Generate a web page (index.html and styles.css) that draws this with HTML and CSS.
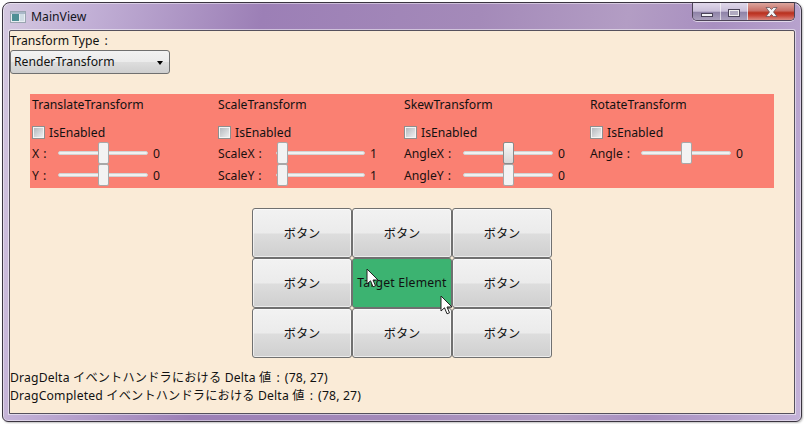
FILE: index.html
```html
<!DOCTYPE html>
<html lang="ja">
<head>
<meta charset="utf-8">
<title>MainView</title>
<link rel="stylesheet" href="styles.css">
</head>
<body>
<div class="window">
  <header class="titlebar">
    <svg class="app-icon" width="16" height="12" viewBox="0 0 16 12"><rect x="0.5" y="0.5" width="15" height="11" fill="#e8eef2" stroke="#9aa4b0"/><rect x="1" y="1" width="14" height="2" fill="#a9b8c8"/><rect x="2" y="3" width="7" height="7" fill="#4f8f94"/><rect x="10" y="3" width="4" height="7" fill="#d0dce4"/></svg>
    <span class="title">MainView</span>
    <div class="controls">
      <div class="ctl ctl-min"><span class="min-glyph"></span></div>
      <div class="ctl ctl-max"><span class="max-glyph"></span></div>
      <div class="ctl ctl-close"><svg width="13" height="10" viewBox="0 0 13 10"><path d="M1 .5h3.500L6.500 2.500 8.500 .5H12L8.500 5 12 9.500H8.500L6.500 7.500 4.500 9.500H1L4.500 5z" fill="#f4f4f6" stroke="#5a4a50" stroke-width="0.7"/></svg></div>
    </div>
  </header>
  <main class="content">
    <div class="type-label">Transform Type<span class="sep">:</span></div>
    <div class="combo"><span>RenderTransform</span><span class="combo-arrow"></span></div>
    <section class="panel">
      <div class="col">
        <div class="col-title">TranslateTransform</div>
        <label class="check"><span class="box"></span>IsEnabled</label>
        <div class="row"><span class="lab lab-s">X<span class="sep">:</span></span><span class="slider"><i class="thumb mid"></i></span><span class="val">0</span></div>
        <div class="row"><span class="lab lab-s">Y<span class="sep">:</span></span><span class="slider"><i class="thumb mid"></i></span><span class="val">0</span></div>
      </div>
      <div class="col">
        <div class="col-title">ScaleTransform</div>
        <label class="check"><span class="box"></span>IsEnabled</label>
        <div class="row"><span class="lab lab-m">ScaleX<span class="sep">:</span></span><span class="slider"><i class="thumb start"></i></span><span class="val">1</span></div>
        <div class="row"><span class="lab lab-m">ScaleY<span class="sep">:</span></span><span class="slider"><i class="thumb start"></i></span><span class="val">1</span></div>
      </div>
      <div class="col">
        <div class="col-title">SkewTransform</div>
        <label class="check"><span class="box"></span>IsEnabled</label>
        <div class="row"><span class="lab lab-l">AngleX<span class="sep">:</span></span><span class="slider"><i class="thumb mid active"></i></span><span class="val">0</span></div>
        <div class="row"><span class="lab lab-l">AngleY<span class="sep">:</span></span><span class="slider"><i class="thumb mid"></i></span><span class="val">0</span></div>
      </div>
      <div class="col">
        <div class="col-title">RotateTransform</div>
        <label class="check"><span class="box"></span>IsEnabled</label>
        <div class="row"><span class="lab lab-xl">Angle<span class="sep">:</span></span><span class="slider"><i class="thumb mid"></i></span><span class="val">0</span></div>
      </div>
    </section>
    <section class="grid">
      <button class="btn">ボタン</button>
      <button class="btn">ボタン</button>
      <button class="btn">ボタン</button>
      <button class="btn">ボタン</button>
      <div class="target">Target Element
        <svg class="cursor cursor-a" width="13" height="20" viewBox="0 0 13 20"><path d="M1 1v15l3.500-3.200 2.500 6 2.500-1-2.500-5.800H12z" fill="#fff" stroke="#222" stroke-width="1"/></svg>
        <svg class="cursor cursor-b" width="13" height="20" viewBox="0 0 13 20"><path d="M1 1v15l3.500-3.200 2.500 6 2.500-1-2.500-5.800H12z" fill="#fff" stroke="#222" stroke-width="1"/></svg>
      </div>
      <button class="btn">ボタン</button>
      <button class="btn">ボタン</button>
      <button class="btn">ボタン</button>
      <button class="btn">ボタン</button>
    </section>
    <p class="status">DragDelta イベントハンドラにおける Delta 値<span class="sep">:</span>(78, 27)</p>
    <p class="status">DragCompleted イベントハンドラにおける Delta 値<span class="sep">:</span>(78, 27)</p>
  </main>
</div>
</body>
</html>
```
FILE: styles.css
```css
* { box-sizing: border-box; }
html, body { margin: 0; padding: 0; width: 804px; height: 424px; overflow: hidden; background: #fff; }
body { padding: 2px 0 0 2px; font-family: "Noto Sans", "Noto Sans CJK JP", sans-serif; font-size: 12.2px; color: #111; }

.window {
  width: 800px; height: 420px;
  display: flex; flex-direction: column;
  border: 1px solid #3a3440; border-radius: 8px 8px 6px 6px;
  background: linear-gradient(100deg, #d4c8e0 0%, #c2b0d6 10%, #9c7fb6 30%, #a48ab9 55%, #b39dc4 72%, #a88fc0 82%, #c4b2d8 100%);
  box-shadow: inset 0 0 0 1px rgba(255,255,255,.45), 1px 1px 2px rgba(0,0,0,.25);
}
.titlebar { height: 27px; flex: none; display: flex; align-items: center; padding: 0 6px 0 7px; position: relative; }
.app-icon { flex: none; }
.title { margin-left: 5px; color: #14141c; }
.controls {
  margin-left: auto; align-self: flex-start;
  display: flex; height: 18px; width: 103px;
  border: 1px solid #4d4458; border-top: 0; border-radius: 0 0 5px 5px; overflow: hidden;
  box-shadow: 0 1px 0 rgba(255,255,255,.6);
}
.ctl { display: flex; align-items: center; justify-content: center; height: 100%; border-right: 1px solid rgba(255,255,255,.6); }
.ctl-min, .ctl-max { width: 28px; background: linear-gradient(#e0d8ea 0%, #c9bfd9 48%, #8f83a8 55%, #aaa0bd 100%); }
.ctl-max { width: 27px; }
.ctl-close { flex: 1; border-right: 0; background: linear-gradient(#dca69e 0%, #c96f66 45%, #b8301e 58%, #c8483a 75%, #d88a80 100%); }
.min-glyph { width: 12px; height: 4px; margin-top: 7px; background: #f2f2f6; border: 1px solid #4a4358; }
.max-glyph { width: 12px; height: 8px; margin-top: 2px; border: 1px solid #4a4358; background: #b0aac0; box-shadow: inset 0 0 0 1px #eee; }

.content {
  margin: 0 6px 0 6px; height: 384px; flex: none;
  background: #faebd7; border: 1px solid #55505c; border-radius: 2px 2px 0 0;
  display: flex; flex-direction: column;
  box-shadow: 0 0 0 1px rgba(255,255,255,.5);
}
.sep { margin: 0 5px 0 5px; }
.type-label { height: 18px; line-height: 20px; }
.combo {
  width: 160px; height: 24px; margin-top: 1px; flex: none;
  display: flex; align-items: center; justify-content: space-between; padding: 0 6px 2px 3px;
  border: 1px solid #707070; border-radius: 3px;
  background: linear-gradient(#f2f2f2 0%, #ebebeb 50%, #dddddd 52%, #cfcfcf 100%);
}
.combo-arrow { width: 0; height: 0; border-left: 3.500px solid transparent; border-right: 3.500px solid transparent; border-top: 4px solid #000; margin-top: 4px; }

.panel {
  margin: 20px 0 0 20px; width: 744px; height: 94px; flex: none;
  background: #fa8072; padding: 0 0 0 2px;
  display: grid; grid-template-columns: repeat(4, 186px);
}
.col { display: flex; flex-direction: column; }
.col-title { height: 18px; line-height: 18px; margin-top: 2px; }
.check { display: flex; align-items: center; gap: 4px; height: 18px; margin-top: 9px; margin-bottom: 1px; }
.box { width: 13px; height: 13px; flex: none; border: 1px solid #8e8f8f; background: linear-gradient(135deg, #aeb3b9, #f4f4f4); box-shadow: inset 0 0 0 1px #f4f4f4; }
.row { display: flex; align-items: center; height: 22px; color: #1a1010; }
.lab { flex: none; white-space: nowrap; }
.lab .sep { margin: 0 0 0 4px; }
.lab-s { width: 26px; }
.lab-m { width: 58px; }
.lab-l { width: 59px; }
.lab-xl { width: 51px; }
.slider { position: relative; width: 90px; height: 4px; flex: none; background: #f0f0f0; border: 1px solid #d2d2d2; border-radius: 2px; }
.lab-m + .slider { width: 89px; }
.thumb { position: absolute; top: -10px; width: 11px; height: 22px; background: #f3f3f3; border: 1px solid #a8a8a8; border-radius: 2px; }
.thumb.mid { left: 39px; }
.thumb.start { left: 0; }
.thumb.active { background: linear-gradient(#f8f8f8, #d8d8d8); border-color: #8a8a8a; }
.val { margin-left: 5px; }

.grid {
  width: 300px; height: 150px; margin: 20px 0 0 242px; flex: none;
  display: grid; grid-template-columns: repeat(3, 100px); grid-template-rows: repeat(3, 50px);
}
.btn {
  margin: 0; padding: 0 0 1px; font: inherit; color: #111;
  border: 1px solid #707070; border-radius: 3px;
  background: linear-gradient(#f2f2f2 0%, #ebebeb 50%, #dddddd 52%, #cfcfcf 100%);
  box-shadow: inset 0 0 0 1px rgba(255,255,255,.6);
}
.target {
  position: relative; display: flex; align-items: center; justify-content: center;
  padding-bottom: 2px; letter-spacing: .2px; white-space: nowrap;
  background: #3cb371; border: 1px solid #707070; border-radius: 3px;
}
.cursor { position: absolute; }
.cursor-a { left: 13px; top: 9px; }
.cursor-b { left: 87px; top: 36px; }
.status { margin: 0; height: 18px; line-height: 18px; letter-spacing: .17px; white-space: nowrap; }
.grid + .status { margin-top: 11px; }
```
